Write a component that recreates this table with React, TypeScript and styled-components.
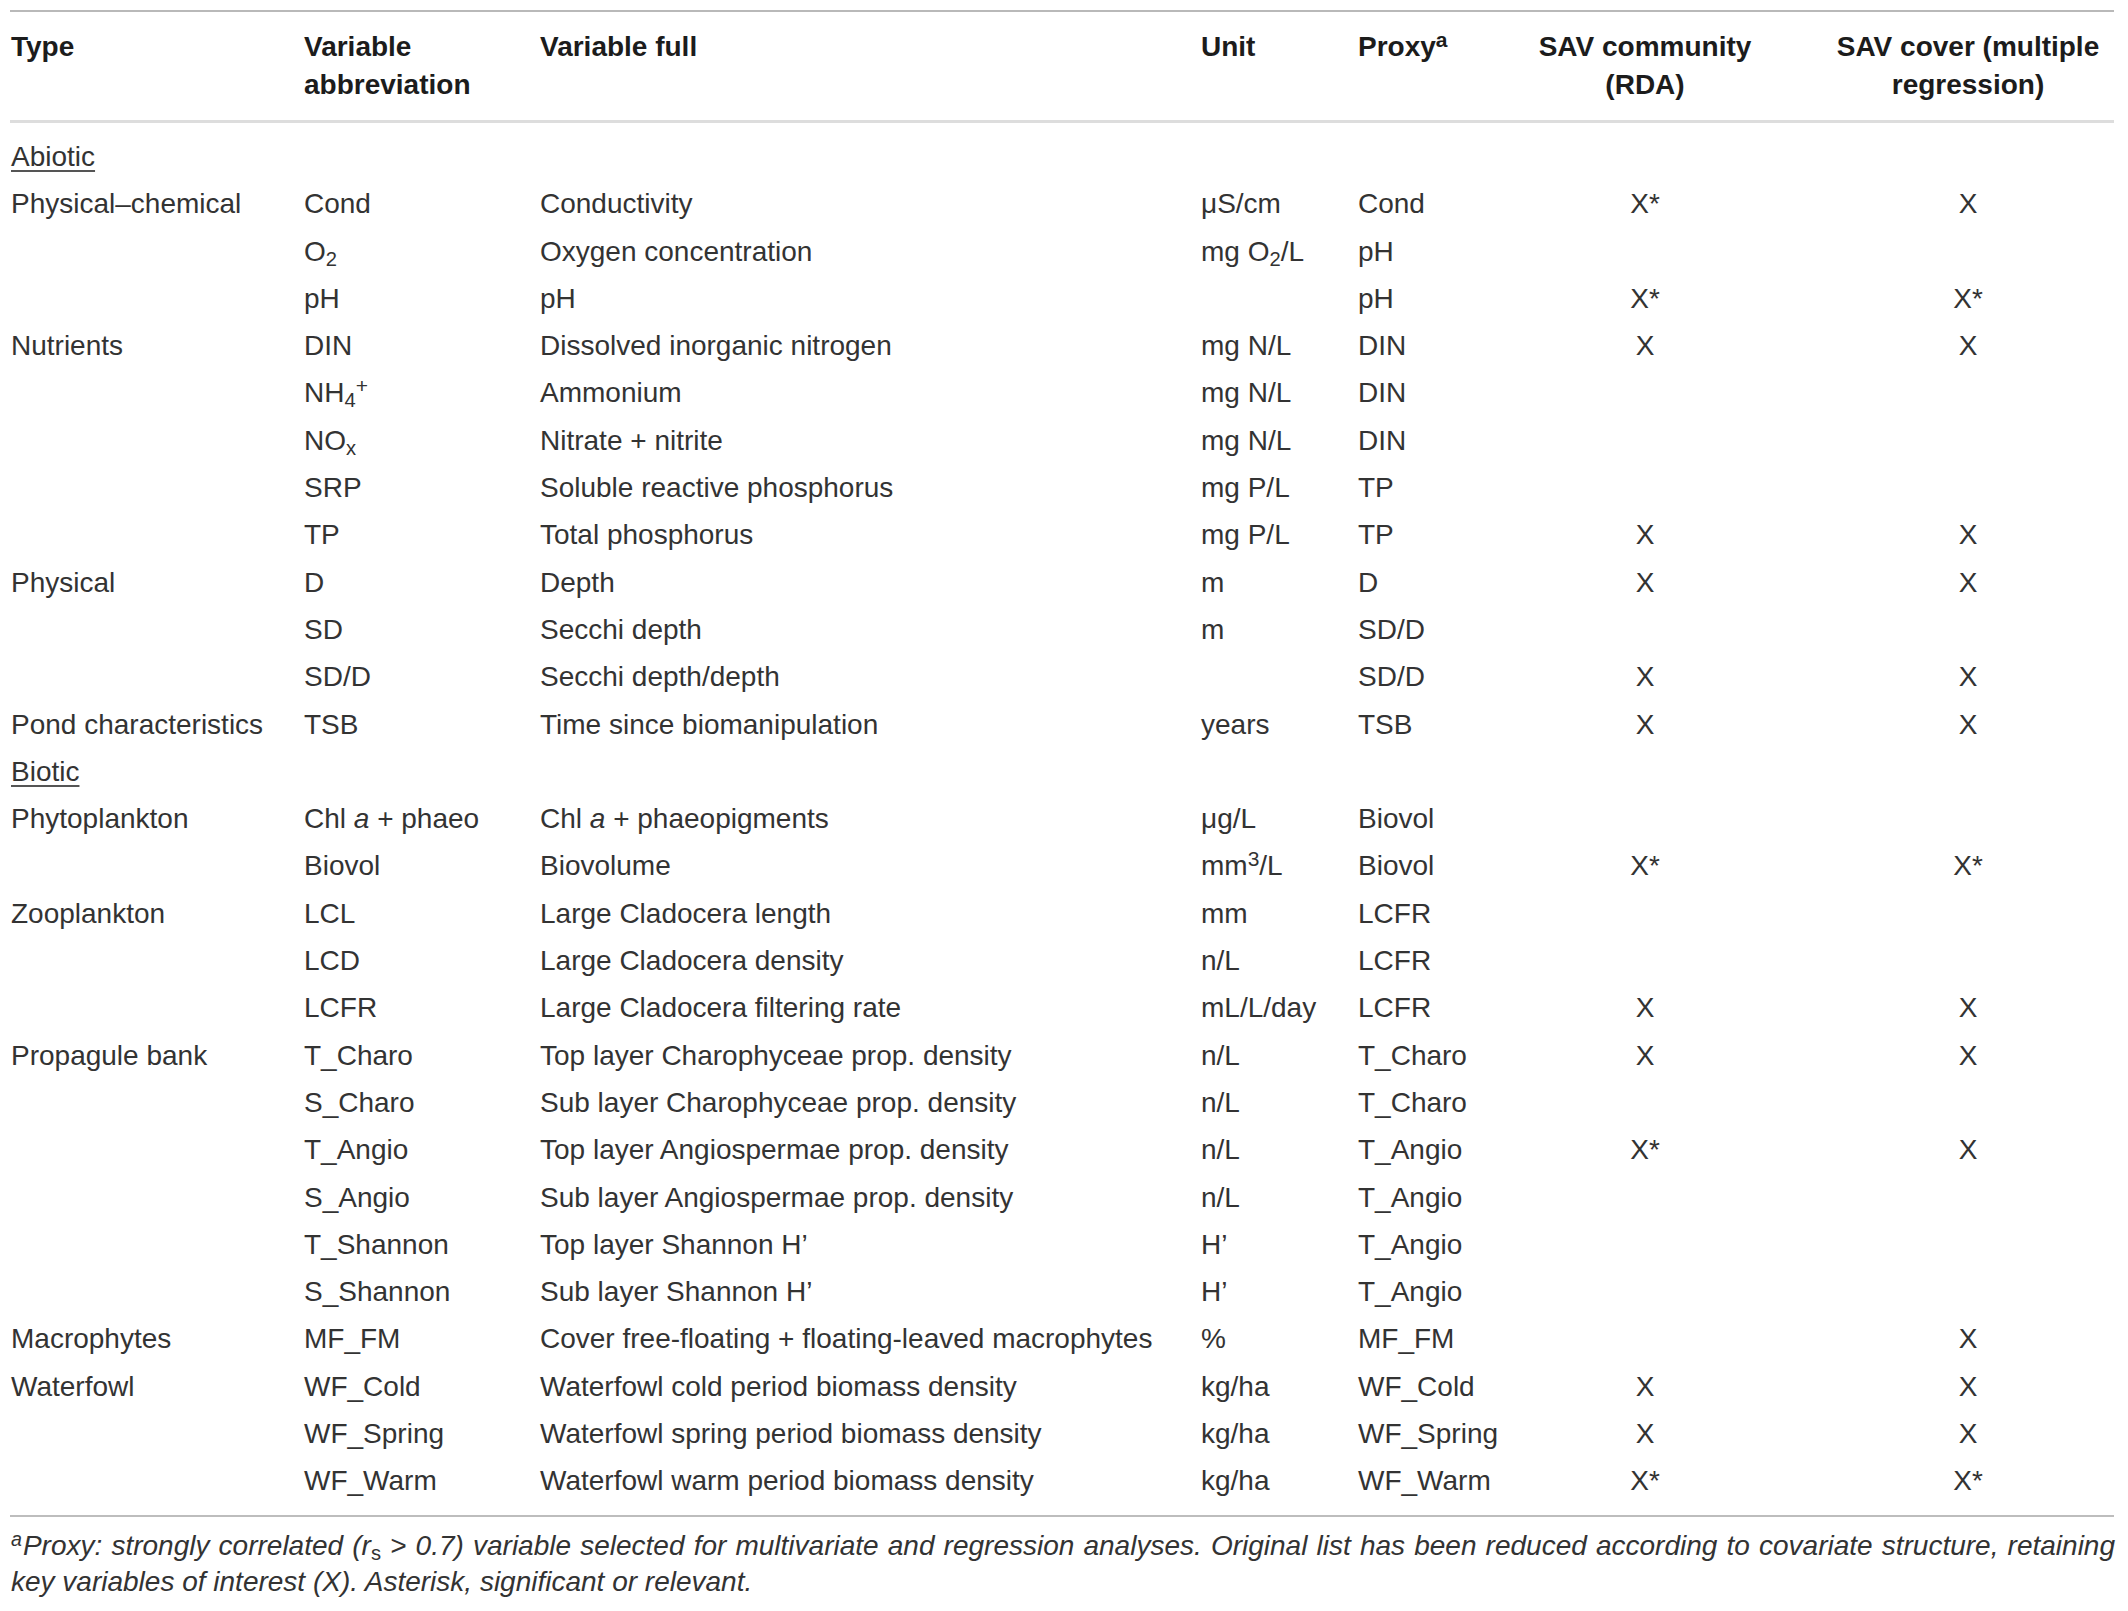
import React from "react";
import styled, { createGlobalStyle } from "styled-components";

const GlobalStyle = createGlobalStyle`
  html, body {
    margin: 0;
    padding: 0;
    background: #ffffff;
  }
  body {
    font-family: "Liberation Sans", Arial, Helvetica, sans-serif;
    color: #262626;
  }
`;

const Page = styled.div`
  padding: 10px 14px 0 10px;
  width: 2104px;
`;

const Table = styled.table`
  width: 2104px;
  table-layout: fixed;
  border-collapse: collapse;
  font-family: "Liberation Sans", Arial, Helvetica, sans-serif;
  font-size: 28px;
`;

const HeadRow = styled.tr`
  border-top: 2px solid #b9b9b9;
  border-bottom: 3px solid #dddddd;
`;

const Th = styled.th<{ $align?: "left" | "center"; $padRight?: number }>`
  text-align: ${(p) => p.$align ?? "left"};
  vertical-align: top;
  font-weight: 700;
  color: #1c1c1c;
  line-height: 38px;
  padding: 16px ${(p) => p.$padRight ?? 0}px 16px 0;
  &:first-child {
    padding-left: 1px;
  }
`;

const Body = styled.tbody`
  tr:first-child td {
    padding-top: 10px;
  }
  tr:last-child td {
    padding-bottom: 10px;
  }
  tr:last-child {
    border-bottom: 2px solid #bdbdbd;
  }
`;

const Td = styled.td<{ $align?: "left" | "center"; $padRight?: number }>`
  text-align: ${(p) => p.$align ?? "left"};
  vertical-align: top;
  line-height: 47.3px;
  padding: 0 ${(p) => p.$padRight ?? 0}px 0 0;
  color: #333333;
  white-space: nowrap;
  &:first-child {
    padding-left: 1px;
  }
`;

const Group = styled.span`
  text-decoration: underline;
  text-underline-offset: 4px;
  text-decoration-thickness: 2px;
  text-decoration-color: #555555;
`;

const Sub = styled.sub`
  font-size: 0.72em;
  line-height: 0;
  vertical-align: -0.26em;
  font-style: normal;
`;

const Sup = styled.sup`
  font-size: 0.75em;
  line-height: 0;
  vertical-align: 0.42em;
`;

const Ital = styled.i`
  font-style: italic;
`;

const Footnote = styled.p`
  margin: 11px 0 0 1px;
  width: 2104px;
  font-style: italic;
  font-size: 28px;
  line-height: 36px;
  text-align: justify;
  text-align-last: left;
  color: #333333;
`;

const FootSup = styled.sup`
  font-size: 0.7em;
  line-height: 0;
  vertical-align: 0.45em;
  margin-right: 1px;
`;

type Row = {
  group?: string;
  type?: React.ReactNode;
  abbr?: React.ReactNode;
  full?: React.ReactNode;
  unit?: React.ReactNode;
  proxy?: React.ReactNode;
  rda?: string;
  mr?: string;
};

const rows: Row[] = [
  { group: "Abiotic" },
  { type: "Physical–chemical", abbr: "Cond", full: "Conductivity", unit: "μS/cm", proxy: "Cond", rda: "X*", mr: "X" },
  {
    abbr: (
      <>
        O<Sub>2</Sub>
      </>
    ),
    full: "Oxygen concentration",
    unit: (
      <>
        mg O<Sub>2</Sub>/L
      </>
    ),
    proxy: "pH",
  },
  { abbr: "pH", full: "pH", unit: "", proxy: "pH", rda: "X*", mr: "X*" },
  { type: "Nutrients", abbr: "DIN", full: "Dissolved inorganic nitrogen", unit: "mg N/L", proxy: "DIN", rda: "X", mr: "X" },
  {
    abbr: (
      <>
        NH<Sub>4</Sub>
        <Sup>+</Sup>
      </>
    ),
    full: "Ammonium",
    unit: "mg N/L",
    proxy: "DIN",
  },
  {
    abbr: (
      <>
        NO<Sub>x</Sub>
      </>
    ),
    full: "Nitrate + nitrite",
    unit: "mg N/L",
    proxy: "DIN",
  },
  { abbr: "SRP", full: "Soluble reactive phosphorus", unit: "mg P/L", proxy: "TP" },
  { abbr: "TP", full: "Total phosphorus", unit: "mg P/L", proxy: "TP", rda: "X", mr: "X" },
  { type: "Physical", abbr: "D", full: "Depth", unit: "m", proxy: "D", rda: "X", mr: "X" },
  { abbr: "SD", full: "Secchi depth", unit: "m", proxy: "SD/D" },
  { abbr: "SD/D", full: "Secchi depth/depth", unit: "", proxy: "SD/D", rda: "X", mr: "X" },
  { type: "Pond characteristics", abbr: "TSB", full: "Time since biomanipulation", unit: "years", proxy: "TSB", rda: "X", mr: "X" },
  { group: "Biotic" },
  {
    type: "Phytoplankton",
    abbr: (
      <>
        Chl <Ital>a</Ital> + phaeo
      </>
    ),
    full: (
      <>
        Chl <Ital>a</Ital> + phaeopigments
      </>
    ),
    unit: "μg/L",
    proxy: "Biovol",
  },
  {
    abbr: "Biovol",
    full: "Biovolume",
    unit: (
      <>
        mm<Sup>3</Sup>/L
      </>
    ),
    proxy: "Biovol",
    rda: "X*",
    mr: "X*",
  },
  { type: "Zooplankton", abbr: "LCL", full: "Large Cladocera length", unit: "mm", proxy: "LCFR" },
  { abbr: "LCD", full: "Large Cladocera density", unit: "n/L", proxy: "LCFR" },
  { abbr: "LCFR", full: "Large Cladocera filtering rate", unit: "mL/L/day", proxy: "LCFR", rda: "X", mr: "X" },
  { type: "Propagule bank", abbr: "T_Charo", full: "Top layer Charophyceae prop. density", unit: "n/L", proxy: "T_Charo", rda: "X", mr: "X" },
  { abbr: "S_Charo", full: "Sub layer Charophyceae prop. density", unit: "n/L", proxy: "T_Charo" },
  { abbr: "T_Angio", full: "Top layer Angiospermae prop. density", unit: "n/L", proxy: "T_Angio", rda: "X*", mr: "X" },
  { abbr: "S_Angio", full: "Sub layer Angiospermae prop. density", unit: "n/L", proxy: "T_Angio" },
  { abbr: "T_Shannon", full: "Top layer Shannon H’", unit: "H’", proxy: "T_Angio" },
  { abbr: "S_Shannon", full: "Sub layer Shannon H’", unit: "H’", proxy: "T_Angio" },
  { type: "Macrophytes", abbr: "MF_FM", full: "Cover free-floating + floating-leaved macrophytes", unit: "%", proxy: "MF_FM", mr: "X" },
  { type: "Waterfowl", abbr: "WF_Cold", full: "Waterfowl cold period biomass density", unit: "kg/ha", proxy: "WF_Cold", rda: "X", mr: "X" },
  { abbr: "WF_Spring", full: "Waterfowl spring period biomass density", unit: "kg/ha", proxy: "WF_Spring", rda: "X", mr: "X" },
  { abbr: "WF_Warm", full: "Waterfowl warm period biomass density", unit: "kg/ha", proxy: "WF_Warm", rda: "X*", mr: "X*" },
];

const widths = [294, 236, 661, 157, 150, 314, 292];

export default function App() {
  return (
    <>
      <GlobalStyle />
      <Page>
        <Table>
          <colgroup>
            {widths.map((w, i) => (
              <col key={i} style={{ width: w }} />
            ))}
          </colgroup>
          <thead>
            <HeadRow>
              <Th>Type</Th>
              <Th>Variable abbreviation</Th>
              <Th>Variable full</Th>
              <Th>Unit</Th>
              <Th>
                Proxy<Sup>a</Sup>
              </Th>
              <Th $align="center" $padRight={40}>
                SAV community (RDA)
              </Th>
              <Th $align="center">SAV cover (multiple regression)</Th>
            </HeadRow>
          </thead>
          <Body>
            {rows.map((r, i) =>
              r.group ? (
                <tr key={i}>
                  <Td>
                    <Group>{r.group}</Group>
                  </Td>
                  <Td />
                  <Td />
                  <Td />
                  <Td />
                  <Td $padRight={40} />
                  <Td />
                </tr>
              ) : (
                <tr key={i}>
                  <Td>{r.type}</Td>
                  <Td>{r.abbr}</Td>
                  <Td>{r.full}</Td>
                  <Td>{r.unit}</Td>
                  <Td>{r.proxy}</Td>
                  <Td $align="center" $padRight={40}>
                    {r.rda}
                  </Td>
                  <Td $align="center">{r.mr}</Td>
                </tr>
              )
            )}
          </Body>
        </Table>
        <Footnote>
          <FootSup>a</FootSup>Proxy: strongly correlated (r<Sub>s</Sub> &gt; 0.7) variable selected for multivariate and
          regression analyses. Original list has been reduced according to covariate structure, retaining key variables of
          interest (X). Asterisk, significant or relevant.
        </Footnote>
      </Page>
    </>
  );
}
